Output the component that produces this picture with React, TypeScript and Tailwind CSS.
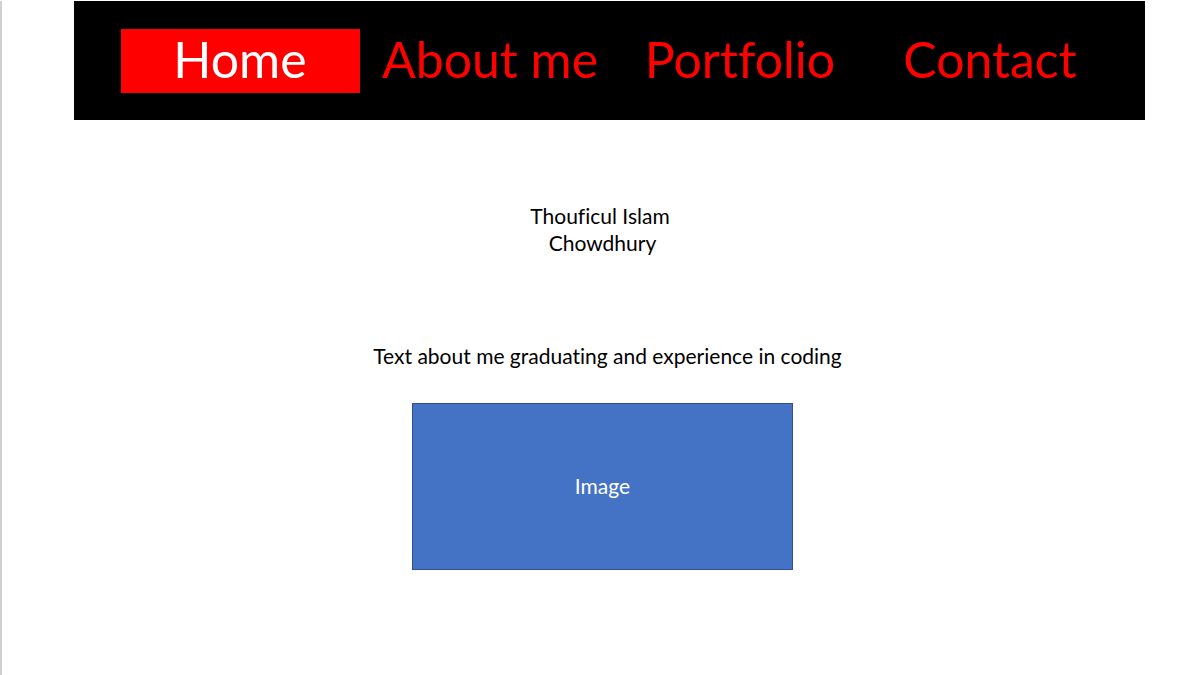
import React from 'react';

const navItems = ['Home', 'About me', 'Portfolio', 'Contact'];

export default function App() {
  return (
    <div className="min-h-[675px] w-[1201px] bg-white border-l-2 border-[#d0d0d0] font-['Lato',sans-serif] text-black [font-variant-ligatures:none]">
      {/* nav bar */}
      <div className="mt-px ml-[72px] flex h-[119px] w-[1071px] items-center bg-black pl-[41px]">
        {navItems.map((item, i) => (
          <div key={item} className="flex w-[250px] justify-center">
            {i === 0 ? (
              <div className="flex h-[64px] w-[239px] items-center justify-center bg-[#ff0000] pb-[3px] text-[50px] leading-none text-white">
                {item}
              </div>
            ) : (
              <span className="pb-[3px] text-[50px] leading-none text-[#ff0000]">{item}</span>
            )}
          </div>
        ))}
      </div>

      <div className="flex flex-col items-center">
        <div className="mt-[82px] pr-[3px] text-center text-[21px] leading-[27px]">
          <p>Thouficul Islam</p>
          <p className="pl-[5px]">Chowdhury</p>
        </div>

        <p className="mt-[86px] pl-[12px] text-[21px] leading-[27px]">
          Text about me graduating and experience in coding
        </p>

        <div className="mt-[34px] ml-[2px] flex h-[167px] w-[381px] items-center justify-center border border-[#2f528f] bg-[#4472c4] pb-[2px] text-[21px] text-white">
          Image
        </div>
      </div>
    </div>
  );
}
